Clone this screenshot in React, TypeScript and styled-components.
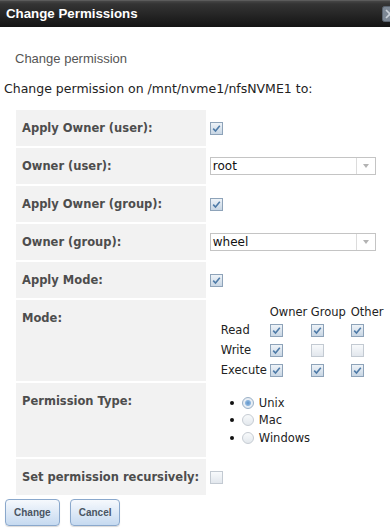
import React from "react";
import styled, { createGlobalStyle } from "styled-components";

const GlobalStyle = createGlobalStyle`
  html, body { margin: 0; padding: 0; background: #fff; }
  body { font-family: "DejaVu Sans", Verdana, sans-serif; color: #222; }
`;

const Dialog = styled.div`
  width: 390px;
  height: 532px;
  overflow: hidden;
  background: #fff;
`;

const TitleBar = styled.div`
  height: 27px;
  display: flex;
  align-items: center;
  justify-content: space-between;
  padding-left: 6px;
  background: linear-gradient(#707070 0, #464646 1px, #343434 4px, #141414 100%);
  color: #fff;
  font-family: "Liberation Sans", Arial, sans-serif;
  font-weight: bold;
  font-size: 13.3px;
  overflow: hidden;
`;

const CloseIcon = styled.svg`
  width: 16px;
  height: 16px;
  margin-right: -8px;
  flex: none;
`;

const Subtitle = styled.div`
  margin: 24px 0 0 15px;
  line-height: 16px;
  font-family: "Liberation Sans", Arial, sans-serif;
  font-size: 13px;
  color: #555;
`;

const Intro = styled.div`
  margin: 14px 0 0 4px;
  line-height: 16px;
  font-size: 12.5px;
  color: #222;
  white-space: nowrap;
`;

const FormTable = styled.table`
  margin: 11px 0 0 14px;
  border-spacing: 2px;
  border-collapse: separate;
`;

const LabelCell = styled.th`
  width: 178px;
  padding: 11px 6px;
  background: #f2f2f2;
  text-align: left;
  vertical-align: top;
  font-size: 11.5px;
  line-height: 14px;
  font-weight: bold;
  color: #4d4d4d;
  white-space: nowrap;
`;

const ValueCell = styled.td<{ $pad?: string }>`
  width: 180px;
  padding: ${(p) => p.$pad ?? "0 2px"};
  vertical-align: ${(p) => (p.$pad ? "top" : "middle")};
  font-size: 11.5px;
  color: #222;
`;

const Box = styled.span<{ $checked: boolean }>`
  display: inline-flex;
  align-items: center;
  justify-content: center;
  box-sizing: border-box;
  width: 13px;
  height: 13px;
  vertical-align: middle;
  border: 1px solid ${(p) => (p.$checked ? "#8ea3b9" : "#c3cad2")};
  background: ${(p) =>
    p.$checked
      ? "linear-gradient(#eef3f8, #c8d6e4)"
      : "linear-gradient(#f8fafc, #e2e7ed)"};
`;

const Checkbox = ({ checked }: { checked: boolean }) => (
  <Box $checked={checked}>
    {checked && (
      <svg width="9" height="9" viewBox="0 0 9 9">
        <path d="M1.2 4.6 L3.5 7 L7.8 1.8" fill="none" stroke="#4f7ba8" strokeWidth="1.6" />
      </svg>
    )}
  </Box>
);

const Select = styled.div`
  width: 166px;
  height: 18px;
  box-sizing: border-box;
  border: 1px solid #c4c4c4;
  display: flex;
  align-items: center;
  background: #fff;
`;

const SelectText = styled.span`
  flex: 1;
  padding-left: 2px;
  font-size: 12px;
  color: #111;
`;

const SelectArrow = styled.span`
  width: 18px;
  height: 100%;
  border-left: 1px solid #dcdcdc;
  display: flex;
  align-items: center;
  justify-content: center;
  &::after {
    content: "";
    border-left: 3.5px solid transparent;
    border-right: 3.5px solid transparent;
    border-top: 4px solid #b3b3b3;
  }
`;

const ModeTable = styled.table`
  margin-left: 13px;
  border-spacing: 0;
  font-size: 11.5px;
  color: #222;
`;

const ModeHead = styled.th`
  font-weight: normal;
  text-align: left;
  height: 16px;
  padding: 0;
  line-height: 16px;
  white-space: nowrap;
`;

const ModeLabel = styled.td`
  width: 49px;
  height: 20px;
  padding: 0;
  white-space: nowrap;
`;

const ModeBox = styled.td<{ $w: number }>`
  width: ${(p) => p.$w}px;
  padding: 0;
`;

const RadioList = styled.ul`
  list-style: none;
  margin: 0;
  padding: 0 0 0 22px;
`;

const RadioItem = styled.li`
  display: flex;
  align-items: center;
  height: 17.5px;
  &::before {
    content: "";
    width: 4px;
    height: 4px;
    border-radius: 50%;
    background: #111;
    margin-right: 8px;
  }
`;

const Radio = styled.span<{ $checked: boolean }>`
  box-sizing: border-box;
  width: 12px;
  height: 12px;
  border-radius: 50%;
  margin-right: 5px;
  border: 1px solid ${(p) => (p.$checked ? "#9ab0c6" : "#c6ccd3")};
  background: ${(p) =>
    p.$checked
      ? "radial-gradient(circle, #5f93c9 0, #8db6de 2.5px, #e8eef5 3.5px, #dfe6ee 100%)"
      : "linear-gradient(#f8fafb, #e3e8ed)"};
`;

const Buttons = styled.div`
  display: flex;
  gap: 10px;
  margin: 2px 0 0 5px;
`;

const Button = styled.button`
  height: 27px;
  padding: 0 8px;
  border: 1px solid #8aa8cc;
  border-radius: 4px;
  background: linear-gradient(#f6f9fd, #d9e6f5 60%, #c6daf0);
  box-shadow: 0 1px 1px rgba(0, 0, 0, 0.15);
  font-family: "Liberation Sans", Arial, sans-serif;
  font-weight: bold;
  font-size: 10px;
  color: #4a5563;
`;

const SimpleRow = ({ label, children }: { label: string; children: React.ReactNode }) => (
  <tr>
    <LabelCell>{label}</LabelCell>
    <ValueCell>{children}</ValueCell>
  </tr>
);

const modeRows: [string, boolean[]][] = [
  ["Read", [true, true, true]],
  ["Write", [true, false, false]],
  ["Execute", [true, true, true]],
];

const widths = [41, 40, 34];

export default function App() {
  return (
    <Dialog>
      <GlobalStyle />
      <TitleBar>
        Change Permissions
        <CloseIcon viewBox="0 0 16 16">
          <rect x="0.5" y="0.5" width="15" height="15" rx="2" fill="#7c8794" stroke="#5a6470" />
          <path d="M4 4 L12 12 M12 4 L4 12" stroke="#c9d0d8" strokeWidth="1.6" />
        </CloseIcon>
      </TitleBar>
      <Subtitle>Change permission</Subtitle>
      <Intro>Change permission on /mnt/nvme1/nfsNVME1 to:</Intro>
      <FormTable>
        <tbody>
          <SimpleRow label="Apply Owner (user):">
            <Checkbox checked />
          </SimpleRow>
          <SimpleRow label="Owner (user):">
            <Select>
              <SelectText>root</SelectText>
              <SelectArrow />
            </Select>
          </SimpleRow>
          <SimpleRow label="Apply Owner (group):">
            <Checkbox checked />
          </SimpleRow>
          <SimpleRow label="Owner (group):">
            <Select>
              <SelectText>wheel</SelectText>
              <SelectArrow />
            </Select>
          </SimpleRow>
          <SimpleRow label="Apply Mode:">
            <Checkbox checked />
          </SimpleRow>
          <tr>
            <LabelCell>Mode:</LabelCell>
            <ValueCell $pad="4px 0 1px 0">
              <ModeTable>
                <thead>
                  <tr>
                    <ModeHead />
                    <ModeHead>Owner</ModeHead>
                    <ModeHead>Group</ModeHead>
                    <ModeHead>Other</ModeHead>
                  </tr>
                </thead>
                <tbody>
                  {modeRows.map(([name, vals]) => (
                    <tr key={name}>
                      <ModeLabel>{name}</ModeLabel>
                      {vals.map((v, i) => (
                        <ModeBox key={i} $w={widths[i]}>
                          <Checkbox checked={v} />
                        </ModeBox>
                      ))}
                    </tr>
                  ))}
                </tbody>
              </ModeTable>
            </ValueCell>
          </tr>
          <tr>
            <LabelCell>Permission Type:</LabelCell>
            <ValueCell $pad="11px 0 10px 0">
              <RadioList>
                <RadioItem>
                  <Radio $checked />
                  Unix
                </RadioItem>
                <RadioItem>
                  <Radio $checked={false} />
                  Mac
                </RadioItem>
                <RadioItem>
                  <Radio $checked={false} />
                  Windows
                </RadioItem>
              </RadioList>
            </ValueCell>
          </tr>
          <SimpleRow label="Set permission recursively:">
            <Checkbox checked={false} />
          </SimpleRow>
        </tbody>
      </FormTable>
      <Buttons>
        <Button>Change</Button>
        <Button>Cancel</Button>
      </Buttons>
    </Dialog>
  );
}
